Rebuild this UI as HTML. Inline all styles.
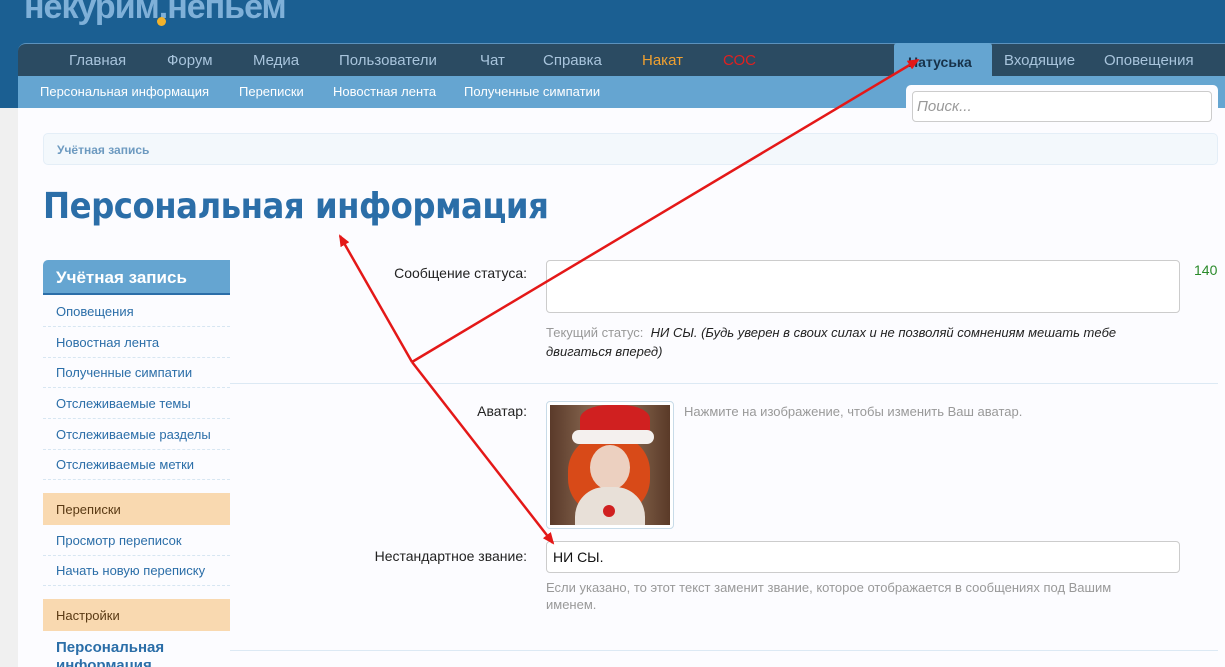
<!DOCTYPE html>
<html><head><meta charset="utf-8"><style>
*{margin:0;padding:0;box-sizing:border-box}
html,body{width:1225px;height:667px;overflow:hidden}
body{background:#f0f0f0;font-family:"Liberation Sans","Noto Sans CJK SC",sans-serif;position:relative}
.hdr{position:absolute;left:0;top:0;width:1225px;height:108px;background:#1b5f92}
.logo{position:absolute;left:24px;top:-12px;font:bold 34px "Liberation Sans",sans-serif;color:#7fb0d8;letter-spacing:-1px}
.logo i{position:absolute;left:133px;top:29px;width:9px;height:9px;border-radius:50%;background:#f2b22c}
.nav{position:absolute;left:18px;top:43px;width:1207px;height:33px;background:#2b4b62;border-radius:8px 0 0 0;border-top:1px solid #5c92bd}
.nav span{position:absolute;top:8px;font-size:15px;color:#a8c4dc}
.sub{position:absolute;left:18px;top:76px;width:1207px;height:32px;background:#65a5d1}
.sub span{position:absolute;top:8px;font-size:13px;color:#fff}
.tab{position:absolute;left:894px;top:43px;width:98px;height:34px;background:#65a5d1;border-radius:3px 3px 0 0;font-size:14px;font-weight:bold;color:#17324a;padding:11px 0 0 14px}
.content{position:absolute;left:18px;top:108px;width:1207px;height:559px;background:#fcfcff}
.search{position:absolute;left:906px;top:85px;width:312px;height:40px;background:#fcfcff;border-radius:5px}
.search div{position:absolute;left:6px;top:6px;width:300px;height:31px;border:1px solid #ccc;border-radius:4px;background:#fff;font-style:italic;color:#999;font-size:15px;padding:6px 4px}
.bc{position:absolute;left:43px;top:133px;width:1175px;height:32px;border:1px solid #e4eef7;border-radius:5px;background:#f3f8fc;font-size:12px;font-weight:bold;color:#6d9ac0;padding:9px 13px}
h1{position:absolute;left:43px;top:186px;font-family:"DejaVu Sans Condensed","Liberation Sans",sans-serif;font-size:36px;font-weight:bold;color:#2b6ea8;letter-spacing:-0.5px}
.sh{position:absolute;left:43px;top:260px;width:187px;height:35px;background:#65a5d1;border-bottom:2px solid #2b6ea8;border-radius:5px 0 0 0;color:#fff;font-weight:bold;font-size:17px;padding:8px 13px}
.si{position:absolute;left:43px;width:187px;height:31px;border-bottom:1px dashed #d7e6f2;font-size:13px;color:#2b6ea8;padding:8px 13px}
.sc{position:absolute;left:43px;width:187px;height:32px;background:#f9d9b0;font-size:13px;color:#5a3a14;padding:9px 13px}
.lbl{position:absolute;right:698px;font-size:14px;color:#222;text-align:right;white-space:nowrap}
.ta{position:absolute;left:546px;top:260px;width:634px;height:53px;border:1px solid #ccc;border-radius:4px;background:#fff}
.hr{position:absolute;left:230px;width:988px;height:1px;background:#dce9f4}
.small{position:absolute;font-size:13px;color:#999}
</style></head><body>
<div class="hdr"><div class="logo">некурим.непьем<i></i></div></div>
<div class="nav">
<span style="left:51px">Главная</span><span style="left:149px">Форум</span><span style="left:235px">Медиа</span><span style="left:321px">Пользователи</span><span style="left:462px">Чат</span><span style="left:525px">Справка</span><span style="left:624px;color:#f0a030">Накат</span><span style="left:705px;color:#e02020">СОС</span><span style="left:986px">Входящие</span><span style="left:1086px">Оповещения</span>
</div>
<div class="tab">Натуська</div>
<div class="sub"><span style="left:22px">Персональная информация</span><span style="left:221px">Переписки</span><span style="left:315px">Новостная лента</span><span style="left:446px">Полученные симпатии</span></div>
<div class="content"></div>
<div class="search"><div>Поиск...</div></div>
<div class="bc">Учётная запись</div>
<h1>Персональная информация</h1>
<div class="sh">Учётная запись</div>
<div class="si" style="top:296px">Оповещения</div>
<div class="si" style="top:327px">Новостная лента</div>
<div class="si" style="top:357px">Полученные симпатии</div>
<div class="si" style="top:388px">Отслеживаемые темы</div>
<div class="si" style="top:419px">Отслеживаемые разделы</div>
<div class="si" style="top:449px">Отслеживаемые метки</div>
<div class="sc" style="top:493px">Переписки</div>
<div class="si" style="top:525px">Просмотр переписок</div>
<div class="si" style="top:555px">Начать новую переписку</div>
<div class="sc" style="top:599px">Настройки</div>
<div style="position:absolute;left:56px;top:639px;font-size:15px;font-weight:bold;color:#2b6ea8;line-height:18px">Персональная<br>информация</div>
<div class="lbl" style="top:265px">Сообщение статуса:</div>
<div class="ta"></div>
<div style="position:absolute;left:1194px;top:262px;font-size:14px;color:#2a8a2a">140</div>
<div style="position:absolute;left:546px;top:323px;width:630px;font-size:13px;line-height:19px;color:#222;font-style:italic"><span style="color:#999;font-style:normal">Текущий статус: </span>&nbsp;НИ СЫ. (Будь уверен в своих силах и не позволяй сомнениям мешать тебе двигаться вперед)</div>
<div class="hr" style="top:383px"></div>
<div class="lbl" style="top:403px">Аватар:</div>
<div style="position:absolute;left:546px;top:401px;width:128px;height:128px;border:1px solid #c8dbe8;border-radius:4px;background:#fff;padding:3px">
<div style="width:120px;height:120px;position:relative;overflow:hidden;background:linear-gradient(90deg,#5a3a2a,#9a7a60 50%,#5a3a28)">
<div style="position:absolute;left:18px;top:30px;width:82px;height:80px;border-radius:45%;background:#d84a18"></div>
<div style="position:absolute;left:40px;top:40px;width:40px;height:45px;border-radius:50%;background:#ecd0c0"></div>
<div style="position:absolute;left:30px;top:0;width:70px;height:35px;background:#d02020;border-radius:40% 40% 0 0"></div>
<div style="position:absolute;left:22px;top:25px;width:82px;height:14px;background:#f4f0ee;border-radius:7px"></div>
<div style="position:absolute;left:25px;top:82px;width:70px;height:40px;background:#e8e0d8;border-radius:30px 30px 0 0"></div>
<div style="position:absolute;left:53px;top:100px;width:12px;height:12px;background:#d02020;border-radius:50%"></div>
</div></div>
<div class="small" style="left:684px;top:404px">Нажмите на изображение, чтобы изменить Ваш аватар.</div>
<div class="lbl" style="top:548px">Нестандартное звание:</div>
<div style="position:absolute;left:546px;top:541px;width:634px;height:32px;border:1px solid #ccc;border-radius:4px;background:#fff;font-size:14px;color:#111;padding:7px 6px">НИ СЫ.</div>
<div class="small" style="left:546px;top:579px;width:600px;line-height:17px">Если указано, то этот текст заменит звание, которое отображается в сообщениях под Вашим именем.</div>
<div class="hr" style="top:650px"></div>
<svg style="position:absolute;left:0;top:0" width="1225" height="667">
<defs><marker id="a" markerWidth="12" markerHeight="10" refX="10" refY="5" orient="auto" markerUnits="userSpaceOnUse"><path d="M0,0 L12,5 L0,10 z" fill="#e41818"/></marker></defs>
<g stroke="#e41818" stroke-width="2.5" fill="none">
<line x1="412" y1="362" x2="918" y2="60" marker-end="url(#a)"/>
<line x1="412" y1="362" x2="340" y2="236" marker-end="url(#a)"/>
<line x1="412" y1="362" x2="553" y2="543" marker-end="url(#a)"/>
</g></svg>
</body></html>
